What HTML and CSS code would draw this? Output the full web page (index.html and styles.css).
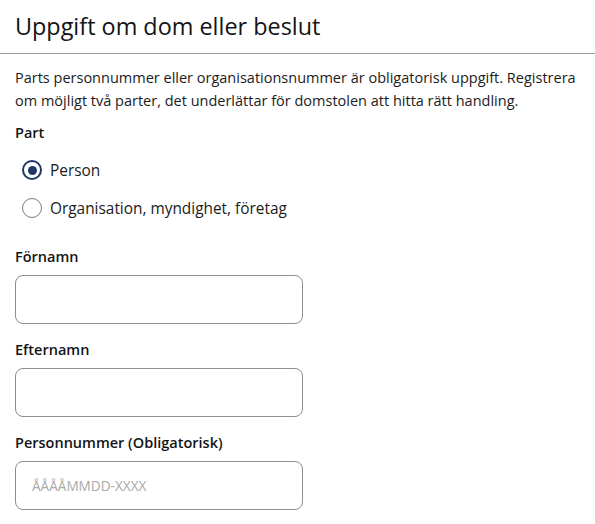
FILE: index.html
```html
<!DOCTYPE html>
<html lang="sv">
<head>
<meta charset="utf-8">
<title>Uppgift om dom eller beslut</title>
<link rel="stylesheet" href="styles.css">
</head>
<body>
<header class="head">
  <h1 class="title">Uppgift om dom eller beslut</h1>
</header>
<main class="content">
  <p class="intro">Parts personnummer eller organisationsnummer är obligatorisk uppgift. Registrera om möjligt två parter, det underlättar för domstolen att hitta rätt handling.</p>
  <fieldset class="part">
    <legend class="label">Part</legend>
    <label class="radio-row">
      <span class="radio checked"></span>
      <span class="radio-text">Person</span>
    </label>
    <label class="radio-row">
      <span class="radio"></span>
      <span class="radio-text">Organisation, myndighet, företag</span>
    </label>
  </fieldset>
  <div class="field">
    <div class="label">Förnamn</div>
    <div class="input"></div>
  </div>
  <div class="field">
    <div class="label">Efternamn</div>
    <div class="input"></div>
  </div>
  <div class="field">
    <div class="label">Personnummer (Obligatorisk)</div>
    <div class="input"><span class="placeholder">ÅÅÅÅMMDD-XXXX</span></div>
  </div>
</main>
</body>
</html>
```
FILE: styles.css
```css
html, body {
  margin: 0;
  padding: 0;
  background: #ffffff;
}
body {
  font-family: "Open Sans", "Liberation Sans", sans-serif;
  color: #1b1b1b;
  width: 595px;
}
.head {
  height: 53px;
  border-bottom: 1px solid #9a9a9a;
  display: flex;
  align-items: center;
  padding: 0 15px;
}
.title {
  margin: 0;
  font-size: 23.4px;
  font-weight: 400;
  line-height: 30px;
  color: #141414;
  transform: translateY(-1px);
}
.content {
  padding: 0 15px;
}
.intro {
  margin: 12px 0 0;
  font-size: 14.5px;
  line-height: 23px;
  color: #1b1b1b;
}
.label {
  font-size: 14.5px;
  font-weight: 600;
  line-height: 22px;
  color: #141414;
}
.part {
  border: 0;
  margin: 10px 0 0;
  padding: 0;
}
.part .label {
  padding: 0;
  margin-bottom: 7px;
}
.radio-row {
  display: flex;
  align-items: center;
  height: 38px;
  padding-left: 7px;
  gap: 8px;
  font-size: 15.4px;
}
.radio {
  width: 20px;
  height: 20px;
  box-sizing: border-box;
  border: 1.5px solid #7a7a7a;
  border-radius: 50%;
  display: flex;
  align-items: center;
  justify-content: center;
}
.radio.checked {
  border: 2px solid #1f3868;
}
.radio.checked::after {
  content: "";
  width: 9px;
  height: 9px;
  border-radius: 50%;
  background: #1f3868;
}
.radio-text {
  color: #1b1b1b;
}
.field {
  margin-top: 19px;
}
.field + .field {
  margin-top: 15px;
}
.field .label {
  margin-bottom: 7px;
}
.input {
  width: 288px;
  height: 49px;
  box-sizing: border-box;
  border: 1px solid #8d8d8d;
  border-radius: 8px;
  display: flex;
  align-items: center;
  padding-left: 16px;
}
.placeholder {
  font-family: "Open Sans", "Liberation Sans", sans-serif;
  font-size: 13.6px;
  color: #a9a9a9;
}
```
